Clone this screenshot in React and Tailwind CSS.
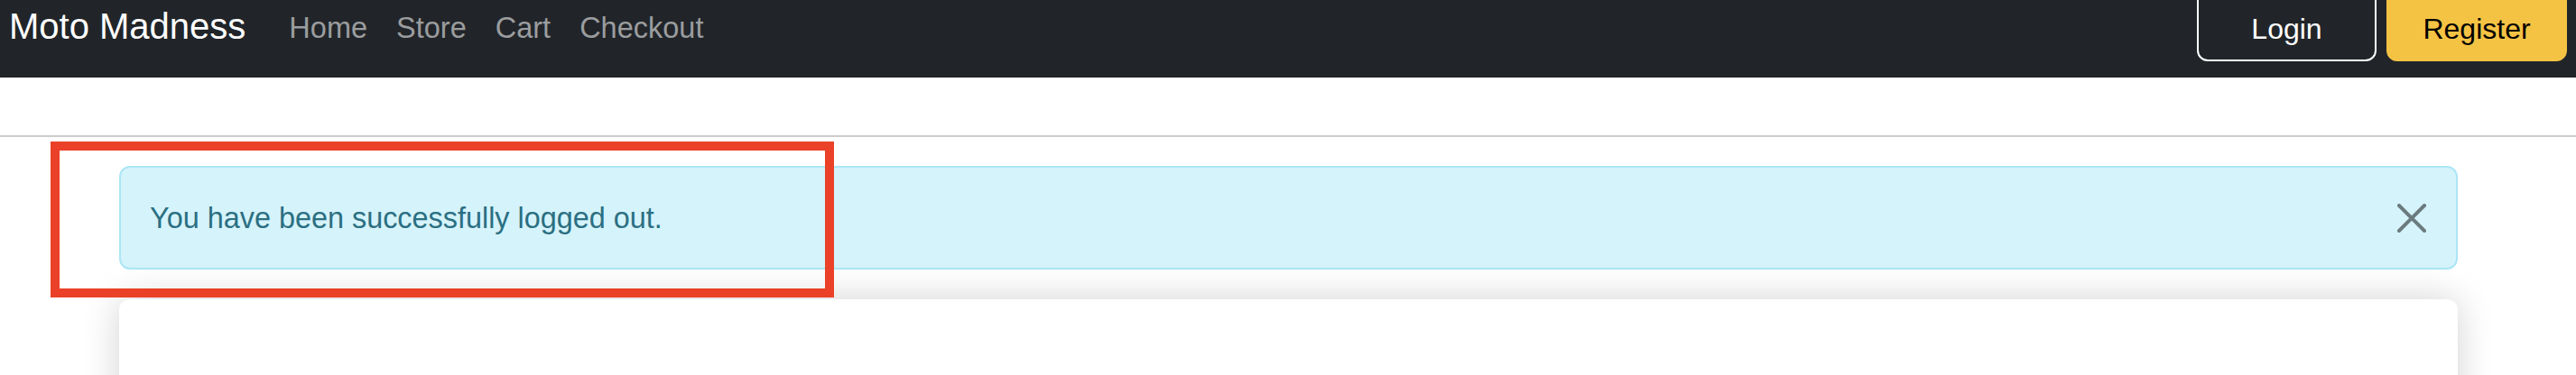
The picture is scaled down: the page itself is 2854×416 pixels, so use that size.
export default function App() {
  const links = ['Home', 'Store', 'Cart', 'Checkout']

  return (
    <div className="relative h-[416px] w-full overflow-hidden bg-white font-['Liberation_Sans',Arial,sans-serif]">
      {/* Navbar */}
      <nav className="flex h-[86px] items-start overflow-hidden bg-[#212529]">
        <span className="ml-[10px] mr-[32px] mt-[9px] text-[40px] leading-none text-white">Moto Madness</span>
        {links.map((l) => (
          <a key={l} className="mt-[15px] px-4 text-[32.5px] leading-none text-[#9b9d9f]">
            {l}
          </a>
        ))}
        <div className="ml-auto mr-[10px] -mt-[12px] flex gap-[11px]">
          <button className="flex h-[80px] w-[199px] justify-center rounded-[12px] border-2 border-white pt-[26px] text-[32px] leading-none text-white">
            Login
          </button>
          <button className="flex h-[80px] w-[200px] justify-center rounded-[12px] border-2 border-[#f5c344] bg-[#f5c344] pt-[26px] text-[32px] leading-none text-black">
            Register
          </button>
        </div>
      </nav>

      <div className="h-[64px]" />
      <div className="h-[2px] bg-[#cccccc]" />

      {/* Content */}
      <div className="pl-[132px] pr-[131px] pt-[32px]">
        <div className="flex h-[115px] items-center justify-between rounded-[12px] border-2 border-[#ace6f5] bg-[#d5f3fb] pl-[32px] pr-[33px]">
          <p className="text-[32.4px] leading-[48px] text-[#2b6f82]">You have been successfully logged out.</p>
          <svg viewBox="0 0 16 16" className="h-[32px] w-[32px] fill-[#6b7b80]">
            <path d="M.293.293a1 1 0 0 1 1.414 0L8 6.586 14.293.293a1 1 0 1 1 1.414 1.414L9.414 8l6.293 6.293a1 1 0 0 1-1.414 1.414L8 9.414l-6.293 6.293a1 1 0 0 1-1.414-1.414L6.586 8 .293 1.707a1 1 0 0 1 0-1.414z" />
          </svg>
        </div>
        <div className="mt-[33px] h-[200px] rounded-[12px] bg-white shadow-[0_0_40px_rgba(0,0,0,0.18)]" />
      </div>

      {/* annotation */}
      <div className="absolute left-[56px] top-[157px] h-[173px] w-[868px] border-[10px] border-[#ea4128]" />
    </div>
  )
}
